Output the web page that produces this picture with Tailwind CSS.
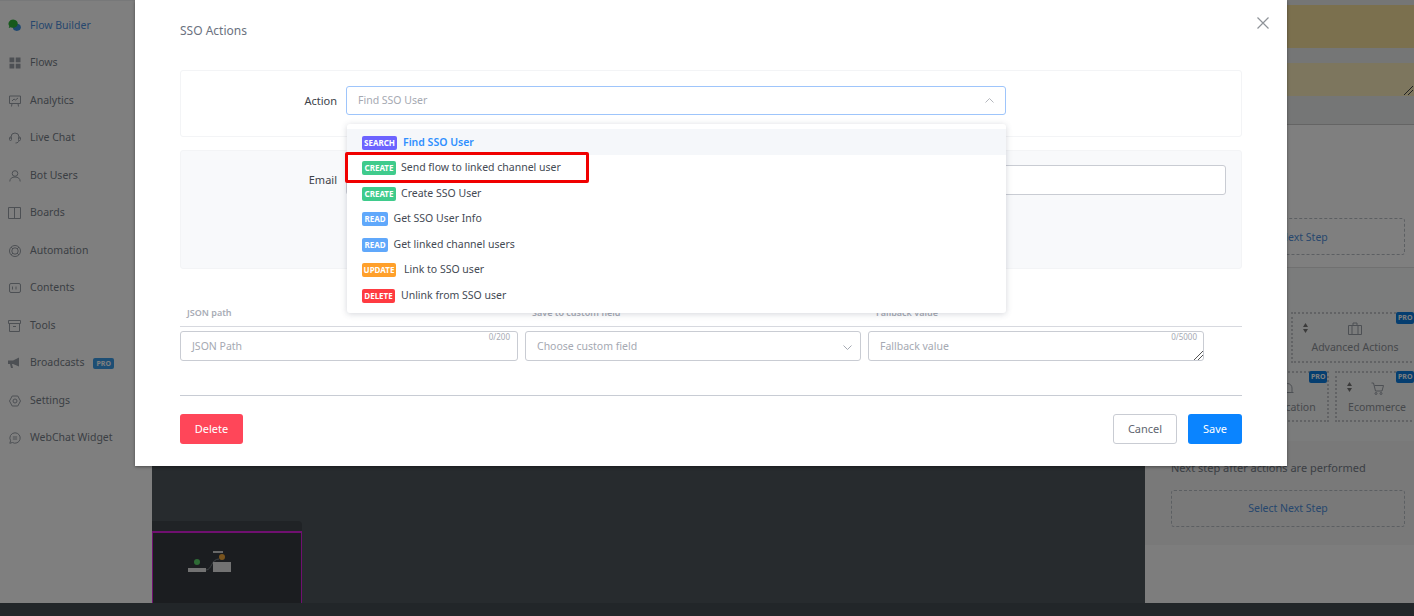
<!DOCTYPE html>
<html lang="en">
  <head>
    <title>SSO Actions</title>
    <script src="https://cdn.jsdelivr.net/npm/@tailwindcss/browser@4"></script>
  </head>

  <body>
    <!-- Page behind the modal -->
    <div class="relative w-[1414px] h-[616px] overflow-hidden flex flex-col bg-white font-['Noto_Sans',sans-serif]">
      <div class="flex flex-1 min-h-0">
        <!-- Sidebar -->
        <nav class="w-[152px] shrink-0 pt-[6px] border-t border-[#eef0f2] text-[10.5px] text-[#777e89]">
          <div class="flex items-center h-[37.5px] pl-[8px] gap-[9px] text-[#4f8fdc]">
            <svg class="w-[13px] h-[13px]" viewBox="0 0 14 14"><ellipse cx="9.500" cy="9" rx="4.300" ry="3.800" fill="#3b8fe0" /><path d="M5.500.5a5 4.500 0 1 1-2.500 8.400L.8 9.800l.6-2.300A5 4.500 0 0 1 5.500.5z" fill="#2eb33a" /></svg>
            <span>Flow Builder</span>
          </div>
          <div class="flex items-center h-[37.5px] pl-[9px] gap-[9px]">
            <svg class="w-[12px] h-[12px]" viewBox="0 0 12 12" fill="#9aa0a8"><rect x="0.500" y="0.500" width="4.800" height="4.800" /><rect x="6.700" y="0.500" width="4.800" height="4.800" /><rect x="0.500" y="6.700" width="4.800" height="4.800" /><rect x="6.700" y="6.700" width="4.800" height="4.800" /></svg>
            <span>Flows</span>
          </div>
          <div class="flex items-center h-[37.5px] pl-[9px] gap-[9px]">
            <svg class="w-[12px] h-[12px]" viewBox="0 0 12 12" fill="none" stroke="#9aa0a8"><path d="M.5 1h11v7.500H.5zM3 8.500 2.500 11.500M9 8.500l.5 3M3 6l2-2 1.500 1L9 3" /></svg>
            <span>Analytics</span>
          </div>
          <div class="flex items-center h-[37.5px] pl-[9px] gap-[9px]">
            <svg class="w-[12px] h-[12px]" viewBox="0 0 12 12" fill="none" stroke="#9aa0a8"><path d="M2 7V5a4 4 0 0 1 8 0v2M10 8c0 2-1.500 3-3.500 3" /><rect x="0.500" y="5" width="2" height="3.500" rx="1" /><rect x="9.500" y="5" width="2" height="3.500" rx="1" /></svg>
            <span>Live Chat</span>
          </div>
          <div class="flex items-center h-[37.5px] pl-[9px] gap-[9px]">
            <svg class="w-[12px] h-[12px]" viewBox="0 0 12 12" fill="none" stroke="#9aa0a8"><circle cx="6" cy="3.500" r="2.800" /><path d="M.8 11.500c0-3 2.200-4.500 5.200-4.500s5.200 1.500 5.200 4.500" /></svg>
            <span>Bot Users</span>
          </div>
          <div class="flex items-center h-[37.5px] pl-[8px] gap-[9px]">
            <svg class="w-[13px] h-[12px]" viewBox="0 0 13 12" fill="none" stroke="#9aa0a8"><path d="M.5.500h12v11H.5zM6.500.500v11" /></svg>
            <span>Boards</span>
          </div>
          <div class="flex items-center h-[37.5px] pl-[9px] gap-[9px]">
            <svg class="w-[12px] h-[12px]" viewBox="0 0 12 12" fill="none" stroke="#9aa0a8"><circle cx="6" cy="6" r="5.500" /><circle cx="6" cy="6" r="3.200" /><path d="M2 2l2 2M10 2 8 4M2 10l2-2M10 10 8 8" /></svg>
            <span>Automation</span>
          </div>
          <div class="flex items-center h-[37.5px] pl-[9px] gap-[9px]">
            <svg class="w-[12px] h-[10px]" viewBox="0 0 12 10" fill="none" stroke="#9aa0a8"><rect x="0.500" y="0.500" width="11" height="9" rx="1.500" /><path d="M3.500 3.500v3M7 3.500v3" /></svg>
            <span>Contents</span>
          </div>
          <div class="flex items-center h-[37.5px] pl-[8px] gap-[9px]">
            <svg class="w-[13px] h-[12px]" viewBox="0 0 13 12" fill="none" stroke="#9aa0a8"><path d="M.5.500h12v3H.5zM1.500 3.500v8h10v-8M5 6.500h3" /></svg>
            <span>Tools</span>
          </div>
          <div class="flex items-center h-[37.5px] pl-[8px] gap-[9px]">
            <svg class="w-[13px] h-[12px]" viewBox="0 0 13 12" fill="#9aa0a8"><path d="M0 3.500h5L11 .5v9L5 7H4l1 4H3L2 7H0z" /></svg>
            <span>Broadcasts</span>
            <span class="px-[3px] h-[11px] leading-[11px] rounded-[2px] bg-[#3a9ce8] text-white text-[7px] font-bold">PRO</span>
          </div>
          <div class="flex items-center h-[37.5px] pl-[9px] gap-[9px]">
            <svg class="w-[12px] h-[12px]" viewBox="0 0 12 12" fill="none" stroke="#9aa0a8"><path d="M3.200 1h5.600L11.500 6 8.800 11H3.200L.5 6z" /><circle cx="6" cy="6" r="2" /></svg>
            <span>Settings</span>
          </div>
          <div class="flex items-center h-[37.5px] pl-[9px] gap-[9px]">
            <svg class="w-[12px] h-[12px]" viewBox="0 0 12 12" fill="none" stroke="#9aa0a8"><path d="M6 .8a5.200 5.200 0 1 1-2.600 9.700L.8 11.300l.8-2.600A5.200 5.200 0 0 1 6 .8zM3.800 5h4.400M3.800 7h4.400" /></svg>
            <span>WebChat Widget</span>
          </div>
        </nav>

        <!-- Canvas -->
        <main class="relative w-[993px] shrink-0 bg-[#4e565c]">
          <div class="absolute left-0 bottom-0 w-[150px] h-[82px] flex flex-col">
            <div class="h-[10px] bg-[#40464c] rounded-tr-[4px]"></div>
            <div class="relative flex-1 bg-[#363b40] border-t-2 border-x border-[#e020e0]">
              <svg class="absolute left-[53px] top-[24px] w-[16px] h-[14px]" viewBox="0 0 16 14" fill="none" stroke="#7d8488"><path d="M0 13c6 0 5-11 13-11" /></svg>
              <span class="absolute left-[41px] top-[26px] w-[6px] h-[6px] rounded-full bg-[#5cd66a]"></span>
              <span class="absolute left-[35px] top-[35px] w-[18px] h-[4px] bg-[#e4e4e4]"></span>
              <span class="absolute left-[60px] top-[29px] w-[18px] h-[10px] bg-[#e4e4e4]"></span>
              <span class="absolute left-[66px] top-[21px] w-[6px] h-[6px] rounded-full bg-[#f0a63a]"></span>
              <span class="absolute left-[60px] top-[18px] w-[10px] h-[2px] bg-[#d0d0d0]"></span>
            </div>
          </div>
        </main>

        <!-- Right panel -->
        <aside class="w-[269px] shrink-0 flex flex-col overflow-hidden text-[10.5px] bg-[#f6f6f6]">
          <div class="h-[125px] shrink-0 pt-[5px] bg-[#ebeded] border-b border-[#c8c8c8]">
            <div class="h-[43px] bg-[#f6e09c]"></div>
            <div class="relative h-[33px] mt-[15px] bg-[#fbecbc]">
              <svg class="absolute right-[1px] bottom-[1px] w-[9px] h-[9px]" viewBox="0 0 9 9" fill="none" stroke="#444"><path d="M0 9 9 0M4 9l5-5" /></svg>
            </div>
          </div>
          <div class="h-[143px] shrink-0 flex flex-col justify-end px-[20px] pb-[12px] bg-white border-b border-[#e0e0e0]">
            <div class="ml-[6px] mr-[-11px] h-[37px] pt-[2px] flex items-center justify-center border border-dashed border-[#b9bec5] rounded-[3px] text-[#4f8fdc]">Select Next Step</div>
          </div>
          <div class="h-[173px] shrink-0 pt-[44px] bg-[#f7f8f8] flex flex-col items-end gap-[8px] text-[#8d9298]">
            <div class="relative w-[128px] h-[51px] mr-[-5px] shrink-0 flex flex-col items-center justify-end pb-[5px] border-2 border-dotted border-[#c4c7cb]">
              <svg class="absolute left-[10px] top-[9px] w-[5px] h-[10px]" viewBox="0 0 5 10" fill="#777"><path d="M2.500 0 5 4H0zM2.500 10 0 6h5z" /></svg>
              <svg class="w-[14px] h-[13px] mb-[5px]" viewBox="0 0 14 13" fill="none" stroke="#9aa0a8"><path d="M.5 3.500h13v9H.5zM5 3.500V1h4v2.500M4 3.500v9M10 3.500v9" /></svg>
              <span>Advanced Actions</span>
              <span class="absolute right-[3px] top-[-2px] w-[18px] h-[12px] rounded-[2px] bg-[#0a7de0] text-white text-[7px] leading-[12px] font-bold px-[2px]">PRO</span>
            </div>
            <div class="flex gap-[6px] mr-[-5px]">
              <div class="relative w-[84px] h-[51px] flex flex-col items-center justify-end pb-[4px] border-2 border-dotted border-[#c4c7cb]">
                <svg class="w-[13px] h-[13px] mb-[5px]" viewBox="0 0 13 13" fill="none" stroke="#9aa0a8"><path d="M2 10V6a4.500 4.500 0 0 1 9 0v4M.5 10.500h12" /></svg>
                <span>Notification</span>
                <span class="absolute right-[0px] top-[-2px] w-[18px] h-[12px] rounded-[2px] bg-[#0a7de0] text-white text-[7px] leading-[12px] font-bold px-[2px]">PRO</span>
              </div>
              <div class="relative w-[84px] h-[51px] flex flex-col items-center justify-end pb-[4px] border-2 border-dotted border-[#c4c7cb]">
                <svg class="absolute left-[10px] top-[9px] w-[5px] h-[10px]" viewBox="0 0 5 10" fill="#777"><path d="M2.500 0 5 4H0zM2.500 10 0 6h5z" /></svg>
                <svg class="w-[13px] h-[13px] mb-[5px]" viewBox="0 0 13 13" fill="none" stroke="#9aa0a8"><path d="M.5 1h2l2 8h6.500l1.500-5.500H3.500" /><circle cx="5" cy="11.500" r="1" /><circle cx="10" cy="11.500" r="1" /></svg>
                <span>Ecommerce</span>
                <span class="absolute right-[3px] top-[-2px] w-[18px] h-[12px] rounded-[2px] bg-[#0a7de0] text-white text-[7px] leading-[12px] font-bold px-[2px]">PRO</span>
              </div>
            </div>
          </div>
          <div class="h-[104px] shrink-0 px-[26px] pt-[20px] bg-[#f2f3f3]">
            <p class="text-[11px] text-[#777e89] leading-[14px]">Next step after actions are performed</p>
            <div class="mt-[15px] mr-[-17px] h-[37px] flex items-center justify-center border border-dashed border-[#b9bec5] rounded-[3px] text-[#4f8fdc]">Select Next Step</div>
          </div>
          <div class="flex-1 bg-[#fbfbfb]"></div>
        </aside>
      </div>
      <div class="h-[13px] shrink-0 bg-[#444c52]"></div>

      <!-- Overlay -->
      <div class="absolute inset-0 bg-black/50"></div>

      <!-- SSO Actions modal -->
      <div class="absolute left-[135px] top-0 w-[1152px] h-[466px] bg-white text-[11px] text-[#444a54] shadow-[0_1px_3px_rgba(0,0,0,0.4)]">
        <div class="relative h-[70px] pl-[45px] pt-[22px]">
          <h2 class="text-[12px] leading-[17px] text-[#6b7280]">SSO Actions</h2>
          <svg class="absolute right-[18px] top-[17px] w-[12px] h-[12px]" viewBox="0 0 12 12" fill="none" stroke="#8f9399" stroke-width="1.200"><path d="M.5.500l11 11M11.500.500l-11 11" /></svg>
        </div>

        <div class="mx-[45px]">
          <!-- Action -->
          <div class="h-[67px] flex items-start pt-[15px] border border-[#f3f4f6] rounded-[3px]">
            <label class="w-[156px] shrink-0 text-right leading-[29px] text-[#3d4249]">Action</label>
            <div class="relative ml-[9px] w-[660px]">
              <div class="h-[29px] flex items-center justify-between px-[11px] border-[1.5px] border-[#9ec5fb] rounded-[3px] text-[10.5px] text-[#a5a9b2]">
                <span>Find SSO User</span>
                <svg class="w-[9px] h-[5px]" viewBox="0 0 9 5" fill="none" stroke="#b4b7bd"><path d="M.5 4.500l4-4 4 4" /></svg>
              </div>
              <!-- Dropdown -->
              <ul class="absolute z-10 left-[1px] top-[38px] w-[659px] h-[189px] pt-[5px] bg-white rounded-[3px] text-[10.5px] shadow-[0_1px_6px_rgba(60,70,90,0.22)]">
                <li class="flex items-center h-[25.5px] pt-[2px] pl-[15px] gap-[6px] bg-[#f5f7fa] font-semibold text-[#2f8fff]">
                  <span class="h-[14px] w-[35px] text-center rounded-[2px] bg-[#6c63ff] text-white text-[8px] leading-[14px] font-bold">SEARCH</span>
                  <span>Find SSO User</span>
                </li>
                <li class="flex items-center h-[25.5px] pt-[2px] pl-[15px] gap-[5px]">
                  <span class="h-[14px] w-[34px] text-center rounded-[2px] bg-[#3fcb8c] text-white text-[8px] leading-[14px] font-bold">CREATE</span>
                  <span>Send flow to linked channel user</span>
                </li>
                <li class="flex items-center h-[25.5px] pt-[2px] pl-[15px] gap-[5px]">
                  <span class="h-[14px] w-[34px] text-center rounded-[2px] bg-[#3fcb8c] text-white text-[8px] leading-[14px] font-bold">CREATE</span>
                  <span>Create SSO User</span>
                </li>
                <li class="flex items-center h-[25.5px] pt-[2px] pl-[15px] gap-[5.5px]">
                  <span class="h-[14px] w-[26px] text-center rounded-[2px] bg-[#60a8fb] text-white text-[8px] leading-[14px] font-bold">READ</span>
                  <span>Get SSO User Info</span>
                </li>
                <li class="flex items-center h-[25.5px] pt-[2px] pl-[15px] gap-[5.5px]">
                  <span class="h-[14px] w-[26px] text-center rounded-[2px] bg-[#60a8fb] text-white text-[8px] leading-[14px] font-bold">READ</span>
                  <span>Get linked channel users</span>
                </li>
                <li class="flex items-center h-[25.5px] pt-[2px] pl-[15px] gap-[8px]">
                  <span class="h-[14px] w-[34px] text-center rounded-[2px] bg-[#ffa02b] text-white text-[8px] leading-[14px] font-bold">UPDATE</span>
                  <span>Link to SSO user</span>
                </li>
                <li class="flex items-center h-[25.5px] pt-[2px] pl-[15px] gap-[6px]">
                  <span class="h-[14px] w-[33px] text-center rounded-[2px] bg-[#ff3b41] text-white text-[8px] leading-[14px] font-bold">DELETE</span>
                  <span>Unlink from SSO user</span>
                </li>
              </ul>
              <!-- Annotation -->
              <div class="absolute z-20 left-[-1px] top-[66px] w-[244px] h-[31px] border-[3px] border-[#f00000] rounded-[2px]"></div>
            </div>
          </div>

          <!-- Email -->
          <div class="h-[119px] mt-[13px] flex items-start pt-[14px] pr-[15px] bg-[#f8f9fb] border border-[#f3f4f6] rounded-[3px]">
            <label class="w-[156px] shrink-0 text-right leading-[30px] text-[#3d4249]">Email</label>
            <div class="ml-[9px] flex-1 h-[30px] bg-white border border-[#c9ccd3] rounded-[3px]"></div>
          </div>

          <!-- Output mapping -->
          <div class="mt-[38px] h-[20px] flex border-b border-[#d7d9df] text-[9px] font-semibold leading-[12px] text-[#a8acb5]">
            <span class="w-[345px] pl-[7px]">JSON path</span>
            <span class="w-[344px] pl-[7px]">Save to custom field</span>
            <span class="pl-[7px]">Fallback value</span>
          </div>
          <div class="mt-[4px] flex gap-[7px] w-[1024px] text-[10.5px] text-[#a5a9b2]">
            <div class="relative w-[338px] h-[30px] pt-[2px] flex items-center px-[11px] border border-[#c9ccd3] rounded-[3px]">
              <span>JSON Path</span>
              <span class="absolute right-[7px] top-[0px] text-[8px] leading-[10px] text-[#a5a9b2]">0/200</span>
            </div>
            <div class="w-[336px] h-[30px] pt-[2px] flex items-center justify-between px-[11px] pr-[8px] border border-[#c9ccd3] rounded-[3px]">
              <span>Choose custom field</span>
              <svg class="w-[9px] h-[5px]" viewBox="0 0 9 5" fill="none" stroke="#a5a9b2"><path d="M.5.500l4 4 4-4" /></svg>
            </div>
            <div class="relative w-[336px] h-[30px] pt-[2px] flex items-center px-[11px] border border-[#c9ccd3] rounded-[3px]">
              <span>Fallback value</span>
              <span class="absolute right-[6px] top-[0px] text-[8px] leading-[10px] text-[#a5a9b2]">0/5000</span>
              <svg class="absolute right-[0px] bottom-[0px] w-[9px] h-[9px]" viewBox="0 0 9 9" fill="none" stroke="#555"><path d="M0 9 9 0M4 9l5-5" /></svg>
            </div>
          </div>

          <!-- Footer -->
          <div class="mt-[34px] pt-[18px] flex justify-between border-t border-[#c8ccd4]">
            <button class="w-[63px] h-[30px] rounded-[3px] bg-[#ff4659] text-white">Delete</button>
            <div class="flex gap-[11px]">
              <button class="w-[64px] h-[30px] rounded-[3px] bg-white border border-[#c9ccd3] text-[#5f6670]">Cancel</button>
              <button class="w-[54px] h-[30px] rounded-[3px] bg-[#0a84ff] text-white">Save</button>
            </div>
          </div>
        </div>
      </div>
    </div>
  </body>
</html>
